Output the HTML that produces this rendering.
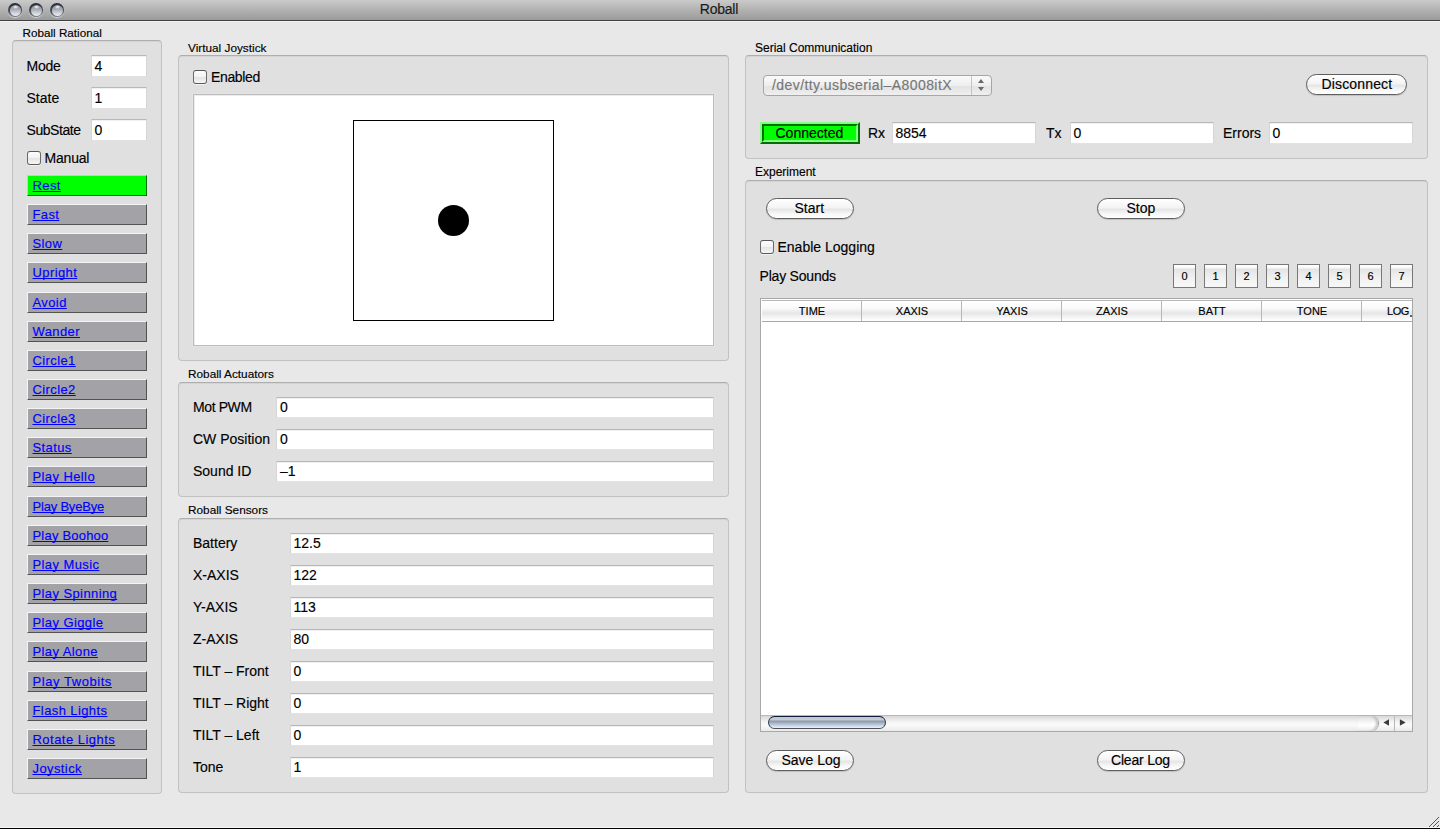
<!DOCTYPE html>
<html><head><meta charset="utf-8"><title>Roball</title>
<style>
html,body{margin:0;padding:0;}
body{width:1440px;height:829px;position:relative;overflow:hidden;background:#e8e8e8;font-family:"Liberation Sans", sans-serif;}
.t{position:absolute;white-space:pre;-webkit-text-stroke:0.15px currentColor;}
.grp{position:absolute;box-sizing:border-box;background:#e0e0e0;border:1px solid #c2c2c2;border-top-color:#aeaeae;border-radius:4px;box-shadow:inset 0 1px 0 #d4d4d4;}
.fld{position:absolute;box-sizing:border-box;background:#fff;border:1px solid #d6d6d6;border-top-color:#b8b8b8;border-bottom-color:#e2e2e2;box-shadow:inset 0 1px 0 #f0f0f0;}
.cb{position:absolute;width:14px;height:14px;box-sizing:border-box;border:1px solid #6a6a6a;border-top-color:#585858;border-bottom-color:#5a5a5a;border-radius:3px;background:linear-gradient(#fdfdfd,#f2f2f2 50%,#e4e4e4 51%,#f6f6f6);box-shadow:0 1px 0 rgba(255,255,255,.6);}
.lb{position:absolute;box-sizing:border-box;width:120px;height:21px;background:#a3a2a7;border-top:1px solid #f4f4f8;border-left:1px solid #f4f4f8;border-right:1px solid #525252;border-bottom:1px solid #525252;}
.lb.g{background:#00ff00;border-top-color:#80ff80;border-left-color:#80ff80;border-right-color:#007000;border-bottom-color:#007000;}
.lt{color:#0000ff;text-decoration:underline;text-decoration-skip-ink:none;}
.pill{position:absolute;box-sizing:border-box;border:1px solid #5e5e5e;border-radius:11px;background:linear-gradient(#ffffff 0%,#f4f4f4 45%,#e6e6e6 55%,#f8f8f8 80%,#ffffff 100%);box-shadow:0 1px 1px rgba(0,0,0,.15);}
.nb{position:absolute;box-sizing:border-box;width:23px;height:24px;border:1px solid #787878;background:linear-gradient(#ffffff 0%,#fbfbfb 10%,#e4e4e4 20%,#ededed 45%,#f4f4f4 75%,#f8f8f8 100%);}
</style></head><body>

<div style="position:absolute;left:0;top:0;width:1440px;height:20px;background:linear-gradient(#cacaca,#9a9a9a);"></div>
<div style="position:absolute;left:0;top:20px;width:1440px;height:1px;background:#404040;"></div>
<div style="position:absolute;left:0;top:21px;width:1440px;height:1px;background:#f2f2f2;"></div>
<div style="position:absolute;left:8px;top:3px;width:14px;height:14px;border-radius:50%;background:linear-gradient(#262a36,#4a505e 60%,#7a8090);box-shadow:0 1px 1px rgba(255,255,255,.55);"></div>
<div style="position:absolute;left:9.5px;top:4.5px;width:11px;height:11px;border-radius:50%;background:radial-gradient(ellipse 3px 2px at 50% 18%,#ffffff 0,rgba(255,255,255,0) 100%),linear-gradient(#8a8e96,#a8acb4 40%,#d4d6dc 75%,#e8eaee);"></div>
<div style="position:absolute;left:29px;top:3px;width:14px;height:14px;border-radius:50%;background:linear-gradient(#262a36,#4a505e 60%,#7a8090);box-shadow:0 1px 1px rgba(255,255,255,.55);"></div>
<div style="position:absolute;left:30.5px;top:4.5px;width:11px;height:11px;border-radius:50%;background:radial-gradient(ellipse 3px 2px at 50% 18%,#ffffff 0,rgba(255,255,255,0) 100%),linear-gradient(#8a8e96,#a8acb4 40%,#d4d6dc 75%,#e8eaee);"></div>
<div style="position:absolute;left:50px;top:3px;width:14px;height:14px;border-radius:50%;background:linear-gradient(#262a36,#4a505e 60%,#7a8090);box-shadow:0 1px 1px rgba(255,255,255,.55);"></div>
<div style="position:absolute;left:51.5px;top:4.5px;width:11px;height:11px;border-radius:50%;background:radial-gradient(ellipse 3px 2px at 50% 18%,#ffffff 0,rgba(255,255,255,0) 100%),linear-gradient(#8a8e96,#a8acb4 40%,#d4d6dc 75%,#e8eaee);"></div>
<div class="t " style="left:699.8px;top:-0.25px;font-size:14px;line-height:18px;color:#1a1a1a;letter-spacing:-0.25px;">Roball</div>
<div style="position:absolute;left:0;top:827px;width:1440px;height:1px;background:#f6f6f6;"></div>
<div style="position:absolute;left:0;top:828px;width:1440px;height:1px;background:#000;"></div>
<div class="t " style="left:22.5px;top:25.45px;font-size:11.7px;line-height:15px;color:#000;">Roball Rational</div>
<div class="grp" style="left:12px;top:40px;width:150px;height:754px;"></div>
<div class="t " style="left:26.5px;top:57.15px;font-size:14px;line-height:18px;color:#000;letter-spacing:-0.25px;">Mode</div>
<div class="fld" style="left:91px;top:55px;width:56px;height:22px;"></div>
<div class="t " style="left:94.5px;top:57.15px;font-size:14px;line-height:18px;color:#000;">4</div>
<div class="t " style="left:26.5px;top:89.15px;font-size:14px;line-height:18px;color:#000;">State</div>
<div class="fld" style="left:91px;top:87px;width:56px;height:22px;"></div>
<div class="t " style="left:94.5px;top:89.15px;font-size:14px;line-height:18px;color:#000;">1</div>
<div class="t " style="left:26.5px;top:121.15px;font-size:14px;line-height:18px;color:#000;letter-spacing:-0.45px;">SubState</div>
<div class="fld" style="left:91px;top:119px;width:56px;height:22px;"></div>
<div class="t " style="left:94.5px;top:121.15px;font-size:14px;line-height:18px;color:#000;">0</div>
<div class="cb" style="left:27px;top:151px;"></div>
<div class="t " style="left:44.5px;top:148.65px;font-size:14px;line-height:18px;color:#000;letter-spacing:-0.2px;">Manual</div>
<div class="lb g" style="left:27px;top:175px;"></div>
<div class="t lt" style="left:32.5px;top:177.50px;font-size:13px;line-height:16px;color:#0000ff;letter-spacing:0.4px;">Rest</div>
<div class="lb" style="left:27px;top:204px;"></div>
<div class="t lt" style="left:32.5px;top:206.50px;font-size:13px;line-height:16px;color:#0000ff;letter-spacing:0.4px;">Fast</div>
<div class="lb" style="left:27px;top:233px;"></div>
<div class="t lt" style="left:32.5px;top:235.50px;font-size:13px;line-height:16px;color:#0000ff;letter-spacing:0.4px;">Slow</div>
<div class="lb" style="left:27px;top:262px;"></div>
<div class="t lt" style="left:32.5px;top:264.50px;font-size:13px;line-height:16px;color:#0000ff;letter-spacing:0.4px;">Upright</div>
<div class="lb" style="left:27px;top:292px;"></div>
<div class="t lt" style="left:32.5px;top:294.50px;font-size:13px;line-height:16px;color:#0000ff;letter-spacing:0.4px;">Avoid</div>
<div class="lb" style="left:27px;top:321px;"></div>
<div class="t lt" style="left:32.5px;top:323.50px;font-size:13px;line-height:16px;color:#0000ff;letter-spacing:0.4px;">Wander</div>
<div class="lb" style="left:27px;top:350px;"></div>
<div class="t lt" style="left:32.5px;top:352.50px;font-size:13px;line-height:16px;color:#0000ff;letter-spacing:0.4px;">Circle1</div>
<div class="lb" style="left:27px;top:379px;"></div>
<div class="t lt" style="left:32.5px;top:381.50px;font-size:13px;line-height:16px;color:#0000ff;letter-spacing:0.4px;">Circle2</div>
<div class="lb" style="left:27px;top:408px;"></div>
<div class="t lt" style="left:32.5px;top:410.50px;font-size:13px;line-height:16px;color:#0000ff;letter-spacing:0.4px;">Circle3</div>
<div class="lb" style="left:27px;top:437px;"></div>
<div class="t lt" style="left:32.5px;top:439.50px;font-size:13px;line-height:16px;color:#0000ff;letter-spacing:0.4px;">Status</div>
<div class="lb" style="left:27px;top:466px;"></div>
<div class="t lt" style="left:32.5px;top:468.50px;font-size:13px;line-height:16px;color:#0000ff;letter-spacing:0.4px;">Play Hello</div>
<div class="lb" style="left:27px;top:496px;"></div>
<div class="t lt" style="left:32.5px;top:498.50px;font-size:13px;line-height:16px;color:#0000ff;letter-spacing:-0.2px;">Play ByeBye</div>
<div class="lb" style="left:27px;top:525px;"></div>
<div class="t lt" style="left:32.5px;top:527.50px;font-size:13px;line-height:16px;color:#0000ff;letter-spacing:0.2px;">Play Boohoo</div>
<div class="lb" style="left:27px;top:554px;"></div>
<div class="t lt" style="left:32.5px;top:556.50px;font-size:13px;line-height:16px;color:#0000ff;letter-spacing:0.4px;">Play Music</div>
<div class="lb" style="left:27px;top:583px;"></div>
<div class="t lt" style="left:32.5px;top:585.50px;font-size:13px;line-height:16px;color:#0000ff;letter-spacing:0.4px;">Play Spinning</div>
<div class="lb" style="left:27px;top:612px;"></div>
<div class="t lt" style="left:32.5px;top:614.50px;font-size:13px;line-height:16px;color:#0000ff;letter-spacing:0.4px;">Play Giggle</div>
<div class="lb" style="left:27px;top:641px;"></div>
<div class="t lt" style="left:32.5px;top:643.50px;font-size:13px;line-height:16px;color:#0000ff;letter-spacing:0.4px;">Play Alone</div>
<div class="lb" style="left:27px;top:671px;"></div>
<div class="t lt" style="left:32.5px;top:673.50px;font-size:13px;line-height:16px;color:#0000ff;letter-spacing:0.55px;">Play Twobits</div>
<div class="lb" style="left:27px;top:700px;"></div>
<div class="t lt" style="left:32.5px;top:702.50px;font-size:13px;line-height:16px;color:#0000ff;letter-spacing:0.4px;">Flash Lights</div>
<div class="lb" style="left:27px;top:729px;"></div>
<div class="t lt" style="left:32.5px;top:731.50px;font-size:13px;line-height:16px;color:#0000ff;letter-spacing:0.47px;">Rotate Lights</div>
<div class="lb" style="left:27px;top:758px;"></div>
<div class="t lt" style="left:32.5px;top:760.50px;font-size:13px;line-height:16px;color:#0000ff;letter-spacing:0.4px;">Joystick</div>
<div class="t " style="left:188px;top:41.41px;font-size:11.8px;line-height:15px;color:#000;">Virtual Joystick</div>
<div class="grp" style="left:178px;top:55px;width:551px;height:306px;"></div>
<div class="cb" style="left:193px;top:70px;"></div>
<div class="t " style="left:211px;top:68.15px;font-size:14px;line-height:18px;color:#000;letter-spacing:-0.35px;">Enabled</div>
<div style="position:absolute;left:193px;top:94px;width:521px;height:252px;box-sizing:border-box;background:#fff;border:1px solid #bcbcbc;box-shadow:inset 1px 1px 0 #ececec, 0 0 0 1px #e4e4e4;"></div>
<div style="position:absolute;left:353px;top:120px;width:201px;height:201px;box-sizing:border-box;border:1px solid #000;"></div>
<div style="position:absolute;left:438px;top:205px;width:31px;height:31px;border-radius:50%;background:#000;"></div>
<div class="t " style="left:188px;top:367.41px;font-size:11.8px;line-height:15px;color:#000;">Roball Actuators</div>
<div class="grp" style="left:178px;top:382px;width:551px;height:115px;"></div>
<div class="t " style="left:193px;top:398.15px;font-size:14px;line-height:18px;color:#000;letter-spacing:-0.4px;">Mot PWM</div>
<div class="fld" style="left:276px;top:397px;width:438px;height:21px;"></div>
<div class="t " style="left:280px;top:398.15px;font-size:14px;line-height:18px;color:#000;">0</div>
<div class="t " style="left:193px;top:430.15px;font-size:14px;line-height:18px;color:#000;">CW Position</div>
<div class="fld" style="left:276px;top:429px;width:438px;height:21px;"></div>
<div class="t " style="left:280px;top:430.15px;font-size:14px;line-height:18px;color:#000;">0</div>
<div class="t " style="left:193px;top:462.15px;font-size:14px;line-height:18px;color:#000;">Sound ID</div>
<div class="fld" style="left:276px;top:461px;width:438px;height:21px;"></div>
<div class="t " style="left:280px;top:462.15px;font-size:14px;line-height:18px;color:#000;">–1</div>
<div class="t " style="left:188px;top:503.41px;font-size:11.8px;line-height:15px;color:#000;">Roball Sensors</div>
<div class="grp" style="left:178px;top:518px;width:551px;height:275px;"></div>
<div class="t " style="left:193px;top:534.15px;font-size:14px;line-height:18px;color:#000;">Battery</div>
<div class="fld" style="left:290px;top:533px;width:424px;height:21px;"></div>
<div class="t " style="left:293.5px;top:534.15px;font-size:14px;line-height:18px;color:#000;">12.5</div>
<div class="t " style="left:193px;top:566.15px;font-size:14px;line-height:18px;color:#000;">X-AXIS</div>
<div class="fld" style="left:290px;top:565px;width:424px;height:21px;"></div>
<div class="t " style="left:293.5px;top:566.15px;font-size:14px;line-height:18px;color:#000;">122</div>
<div class="t " style="left:193px;top:598.15px;font-size:14px;line-height:18px;color:#000;">Y-AXIS</div>
<div class="fld" style="left:290px;top:597px;width:424px;height:21px;"></div>
<div class="t " style="left:293.5px;top:598.15px;font-size:14px;line-height:18px;color:#000;">113</div>
<div class="t " style="left:193px;top:630.15px;font-size:14px;line-height:18px;color:#000;">Z-AXIS</div>
<div class="fld" style="left:290px;top:629px;width:424px;height:21px;"></div>
<div class="t " style="left:293.5px;top:630.15px;font-size:14px;line-height:18px;color:#000;">80</div>
<div class="t " style="left:193px;top:662.15px;font-size:14px;line-height:18px;color:#000;">TILT – Front</div>
<div class="fld" style="left:290px;top:661px;width:424px;height:21px;"></div>
<div class="t " style="left:293.5px;top:662.15px;font-size:14px;line-height:18px;color:#000;">0</div>
<div class="t " style="left:193px;top:694.15px;font-size:14px;line-height:18px;color:#000;">TILT – Right</div>
<div class="fld" style="left:290px;top:693px;width:424px;height:21px;"></div>
<div class="t " style="left:293.5px;top:694.15px;font-size:14px;line-height:18px;color:#000;">0</div>
<div class="t " style="left:193px;top:726.15px;font-size:14px;line-height:18px;color:#000;">TILT – Left</div>
<div class="fld" style="left:290px;top:725px;width:424px;height:21px;"></div>
<div class="t " style="left:293.5px;top:726.15px;font-size:14px;line-height:18px;color:#000;">0</div>
<div class="t " style="left:193px;top:758.15px;font-size:14px;line-height:18px;color:#000;">Tone</div>
<div class="fld" style="left:290px;top:757px;width:424px;height:21px;"></div>
<div class="t " style="left:293.5px;top:758.15px;font-size:14px;line-height:18px;color:#000;">1</div>
<div class="t " style="left:755px;top:41.34px;font-size:12px;line-height:15px;color:#000;">Serial Communication</div>
<div class="grp" style="left:745px;top:55px;width:683px;height:104px;"></div>
<div style="position:absolute;left:763px;top:75px;width:229px;height:21px;box-sizing:border-box;border:1px solid #a6a6a6;border-radius:4px;background:linear-gradient(#fafafa,#eeeeee 50%,#e2e2e2 51%,#efefef);"></div>
<div style="position:absolute;left:971px;top:76px;width:1px;height:19px;background:#c4c4c4;"></div>
<div class="t " style="left:772px;top:76.15px;font-size:14px;line-height:18px;color:#777777;letter-spacing:0.42px;">/dev/tty.usbserial–A8008itX</div>
<svg style="position:absolute;left:974.5px;top:77px" width="12" height="16"><path d="M3 6 L6 2 L9 6 Z" fill="#6a6a6a"/><path d="M3 10 L6 14 L9 10 Z" fill="#6a6a6a"/></svg>
<div class="pill" style="left:1306px;top:74px;width:101px;height:21px;"></div>
<div class="t " style="left:1321.5px;top:75.15px;font-size:14px;line-height:18px;color:#000;letter-spacing:0.15px;">Disconnect</div>
<div style="position:absolute;left:760px;top:122px;width:100px;height:22px;box-sizing:border-box;background:#00ff00;border:2px solid;border-color:#80ff80 #006e00 #006e00 #80ff80;"></div>
<div style="position:absolute;left:762px;top:124px;width:96px;height:18px;box-sizing:border-box;border:2px solid;border-color:#006e00 #80ff80 #80ff80 #006e00;"></div>
<div class="t " style="left:775.5px;top:124.15px;font-size:14px;line-height:18px;color:#000;">Connected</div>
<div class="t " style="left:868px;top:124.15px;font-size:14px;line-height:18px;color:#000;">Rx</div>
<div class="fld" style="left:892px;top:122px;width:144px;height:22px;"></div>
<div class="t " style="left:895.5px;top:124.15px;font-size:14px;line-height:18px;color:#000;">8854</div>
<div class="t " style="left:1046px;top:124.15px;font-size:14px;line-height:18px;color:#000;">Tx</div>
<div class="fld" style="left:1070px;top:122px;width:144px;height:22px;"></div>
<div class="t " style="left:1073.5px;top:124.15px;font-size:14px;line-height:18px;color:#000;">0</div>
<div class="t " style="left:1223px;top:124.15px;font-size:14px;line-height:18px;color:#000;">Errors</div>
<div class="fld" style="left:1269px;top:122px;width:144px;height:22px;"></div>
<div class="t " style="left:1272.5px;top:124.15px;font-size:14px;line-height:18px;color:#000;">0</div>
<div class="t " style="left:755px;top:165.34px;font-size:12px;line-height:15px;color:#000;">Experiment</div>
<div class="grp" style="left:745px;top:180px;width:683px;height:613px;"></div>
<div class="pill" style="left:766px;top:198px;width:88px;height:21px;"></div>
<div class="t " style="left:794.5px;top:199.15px;font-size:14px;line-height:18px;color:#000;">Start</div>
<div class="pill" style="left:1097px;top:198px;width:88px;height:21px;"></div>
<div class="t " style="left:1126.5px;top:199.15px;font-size:14px;line-height:18px;color:#000;">Stop</div>
<div class="cb" style="left:760px;top:240px;"></div>
<div class="t " style="left:777.5px;top:238.15px;font-size:14px;line-height:18px;color:#000;">Enable Logging</div>
<div class="t " style="left:759.5px;top:267.15px;font-size:14px;line-height:18px;color:#000;letter-spacing:-0.2px;">Play Sounds</div>
<div class="nb" style="left:1173px;top:264px;"></div>
<div class="t " style="left:1181.5px;top:269.19px;font-size:11px;line-height:14px;color:#000;">0</div>
<div class="nb" style="left:1204px;top:264px;"></div>
<div class="t " style="left:1212.5px;top:269.19px;font-size:11px;line-height:14px;color:#000;">1</div>
<div class="nb" style="left:1235px;top:264px;"></div>
<div class="t " style="left:1243.5px;top:269.19px;font-size:11px;line-height:14px;color:#000;">2</div>
<div class="nb" style="left:1266px;top:264px;"></div>
<div class="t " style="left:1274.5px;top:269.19px;font-size:11px;line-height:14px;color:#000;">3</div>
<div class="nb" style="left:1297px;top:264px;"></div>
<div class="t " style="left:1305.5px;top:269.19px;font-size:11px;line-height:14px;color:#000;">4</div>
<div class="nb" style="left:1328px;top:264px;"></div>
<div class="t " style="left:1336.5px;top:269.19px;font-size:11px;line-height:14px;color:#000;">5</div>
<div class="nb" style="left:1359px;top:264px;"></div>
<div class="t " style="left:1367.5px;top:269.19px;font-size:11px;line-height:14px;color:#000;">6</div>
<div class="nb" style="left:1390px;top:264px;"></div>
<div class="t " style="left:1398.5px;top:269.19px;font-size:11px;line-height:14px;color:#000;">7</div>
<div style="position:absolute;left:760px;top:298px;width:653px;height:434px;box-sizing:border-box;background:#fff;border:1px solid #a8a8a8;"></div>
<div style="position:absolute;left:762px;top:300px;width:650px;height:22px;box-sizing:border-box;background:linear-gradient(#ffffff 0%,#fafafa 35%,#e6e6e6 62%,#f4f4f4 80%,#ffffff 100%);border-top:1px solid #b8b8b8;border-bottom:1px solid #a8a8a8;"></div>
<div class="t" style="left:762px;width:100px;text-align:center;top:304px;font-size:11px;line-height:14px;">TIME</div>
<div style="position:absolute;left:861px;top:301px;width:1px;height:20px;background:#b8b8b8;"></div>
<div class="t" style="left:862px;width:100px;text-align:center;top:304px;font-size:11px;line-height:14px;">XAXIS</div>
<div style="position:absolute;left:961px;top:301px;width:1px;height:20px;background:#b8b8b8;"></div>
<div class="t" style="left:962px;width:100px;text-align:center;top:304px;font-size:11px;line-height:14px;">YAXIS</div>
<div style="position:absolute;left:1061px;top:301px;width:1px;height:20px;background:#b8b8b8;"></div>
<div class="t" style="left:1062px;width:100px;text-align:center;top:304px;font-size:11px;line-height:14px;">ZAXIS</div>
<div style="position:absolute;left:1161px;top:301px;width:1px;height:20px;background:#b8b8b8;"></div>
<div class="t" style="left:1162px;width:100px;text-align:center;top:304px;font-size:11px;line-height:14px;">BATT</div>
<div style="position:absolute;left:1261px;top:301px;width:1px;height:20px;background:#b8b8b8;"></div>
<div class="t" style="left:1262px;width:100px;text-align:center;top:304px;font-size:11px;line-height:14px;">TONE</div>
<div style="position:absolute;left:1361px;top:301px;width:1px;height:20px;background:#b8b8b8;"></div>
<div class="t " style="left:1387px;top:304.19px;font-size:11px;line-height:14px;color:#000;letter-spacing:-0.4px;">LOG</div>
<div style="position:absolute;left:1410px;top:315px;width:2px;height:2px;border-radius:1px;background:#333;"></div>
<div style="position:absolute;left:761px;top:715px;width:651px;height:16px;box-sizing:border-box;background:linear-gradient(#d8d8d8,#f4f4f4 40%,#fafafa 60%,#eaeaea);border-top:1px solid #b8b8b8;"></div>
<div style="position:absolute;left:768px;top:716px;width:118px;height:13px;box-sizing:border-box;border:1px solid #2a3648;border-top-color:#0e1e3c;border-bottom-color:#4e5258;border-radius:7px;background:linear-gradient(#c0c6ce 0%,#c8ccd4 22%,#8e9cae 40%,#b4c2d2 65%,#e2ecf8 95%);"></div>
<div style="position:absolute;left:1358px;top:716px;width:20px;height:15px;border-radius:0 8px 8px 0;background:linear-gradient(#dcdcdc,#f8f8f8 45%,#ffffff 60%,#ececec);box-shadow:1px 0 1px #9c9c9c, inset -2px 0 2px #c8c8c8;"></div>
<div style="position:absolute;left:1394px;top:716px;width:1px;height:15px;background:#b8b8b8;"></div>
<svg style="position:absolute;left:1380px;top:716px" width="32" height="15"><path d="M3.4 6.5 L9 3.2 L9 9.8 Z" fill="#3a3a3a"/><path d="M19.9 3.2 L25.6 6.5 L19.9 9.8 Z" fill="#3a3a3a"/></svg>
<div class="pill" style="left:766px;top:750px;width:88px;height:21px;"></div>
<div class="t " style="left:781.5px;top:751.15px;font-size:14px;line-height:18px;color:#000;">Save Log</div>
<div class="pill" style="left:1097px;top:750px;width:88px;height:21px;"></div>
<div class="t " style="left:1111px;top:751.15px;font-size:14px;line-height:18px;color:#000;letter-spacing:-0.2px;">Clear Log</div>
<svg style="position:absolute;left:1428px;top:816px" width="12" height="12"><path d="M1 11 L11 1 M5 11 L11 5 M9 11 L11 9" stroke="#555" stroke-width="1"/></svg>
</body></html>
